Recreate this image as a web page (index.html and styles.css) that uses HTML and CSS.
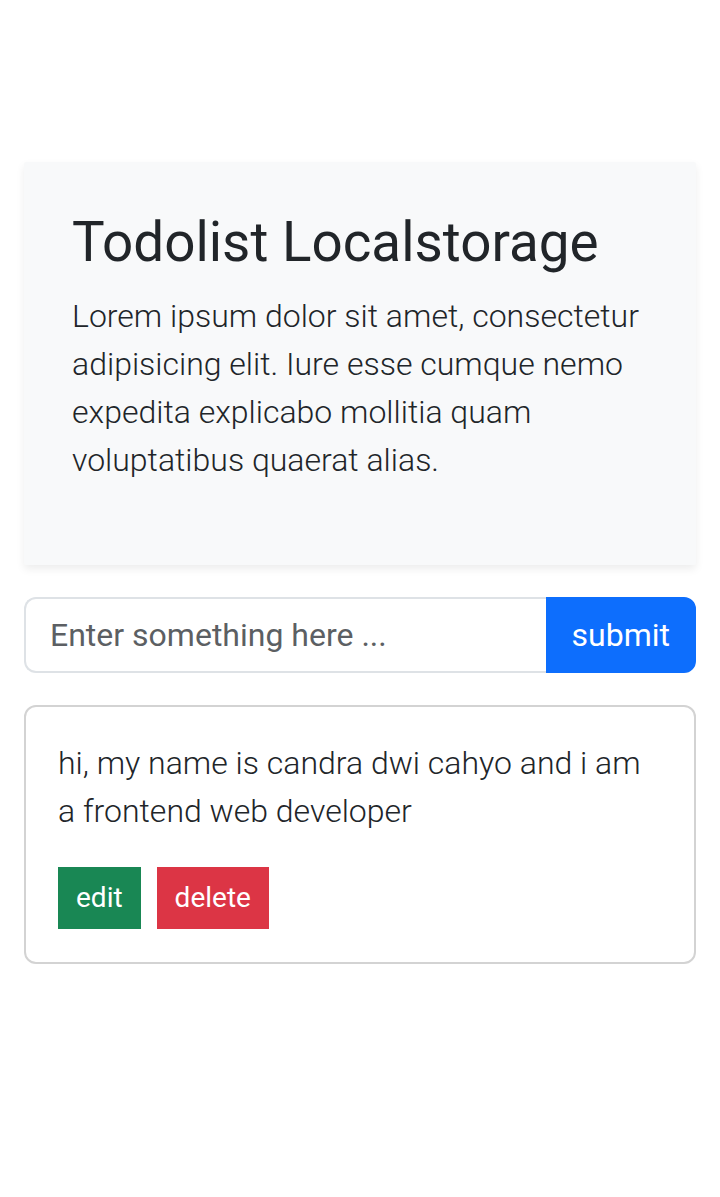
FILE: index.html
```html
<!DOCTYPE html>
<html lang="en">
<head>
<meta charset="utf-8">
<title>Todolist Localstorage</title>
<link rel="stylesheet" href="styles.css">
</head>
<body>
<div class="container">
  <div class="hero">
    <h1 class="hero-title">Todolist Localstorage</h1>
    <p class="hero-lead">Lorem ipsum dolor sit amet, consectetur adipisicing elit. Iure esse cumque nemo expedita explicabo mollitia quam voluptatibus quaerat alias.</p>
  </div>
  <form class="input-group">
    <input class="form-input" type="text" placeholder="Enter something here ...">
    <button class="btn btn-submit" type="button">submit</button>
  </form>
  <div class="todo-card">
    <p class="todo-text">hi, my name is candra dwi cahyo and i am a frontend web developer</p>
    <div class="todo-actions">
      <button class="btn btn-sm btn-edit" type="button">edit</button>
      <button class="btn btn-sm btn-delete" type="button">delete</button>
    </div>
  </div>
</div>
</body>
</html>
```

FILE: styles.css
```css
* { box-sizing: border-box; }
html, body { margin: 0; padding: 0; background: #fff; }
body {
  font-family: Roboto, "Liberation Sans", Arial, sans-serif;
  color: #212529;
  font-size: 32px;
  line-height: 1.5;
}
.container {
  padding: 162px 24px 0;
}
.hero {
  background: #f8f9fa;
  padding: 48px 48px 49px;
  box-shadow: 0 4px 8px rgba(0, 0, 0, 0.075);
  border-radius: 2px;
  margin-bottom: 32px;
}
.hero-title {
  margin: 0 0 16px;
  font-size: 54.8px;
  font-weight: 400;
  line-height: 1.2;
}
.hero-lead {
  margin: 0 0 32px;
  font-size: 32px;
  font-weight: 300;
  line-height: 48px;
}
.input-group {
  display: flex;
  margin: 0 0 32px;
}
.form-input {
  flex: 1;
  min-width: 0;
  font-family: inherit;
  font-size: 32px;
  line-height: 48px;
  padding: 12px 24px;
  border: 2px solid #dee2e6;
  border-right: 0;
  border-radius: 12px 0 0 12px;
  color: #212529;
  background: #fff;
  outline: none;
}
.form-input::placeholder { color: #5c5f63; opacity: 1; }
.btn {
  font-family: inherit;
  color: #fff;
  cursor: pointer;
}
.btn-submit {
  font-size: 32px;
  line-height: 48px;
  padding: 12px 24px;
  border: 2px solid #0d6efd;
  background: #0d6efd;
  border-radius: 0 12px 12px 0;
}
.todo-card {
  border: 2px solid #d3d3d3;
  border-radius: 12px;
  padding: 32px 32px 33px;
}
.todo-text {
  margin: 0 0 32px;
  font-weight: 300;
  font-size: 32px;
  line-height: 48px;
}
.todo-actions {
  display: flex;
  gap: 16px;
}
.btn-sm {
  font-size: 28px;
  line-height: 42px;
  padding: 8px 16px;
  border-radius: 0;
}
.btn-edit { background: #198754; border: 2px solid #198754; }
.btn-delete { background: #dc3545; border: 2px solid #dc3545; }
```
